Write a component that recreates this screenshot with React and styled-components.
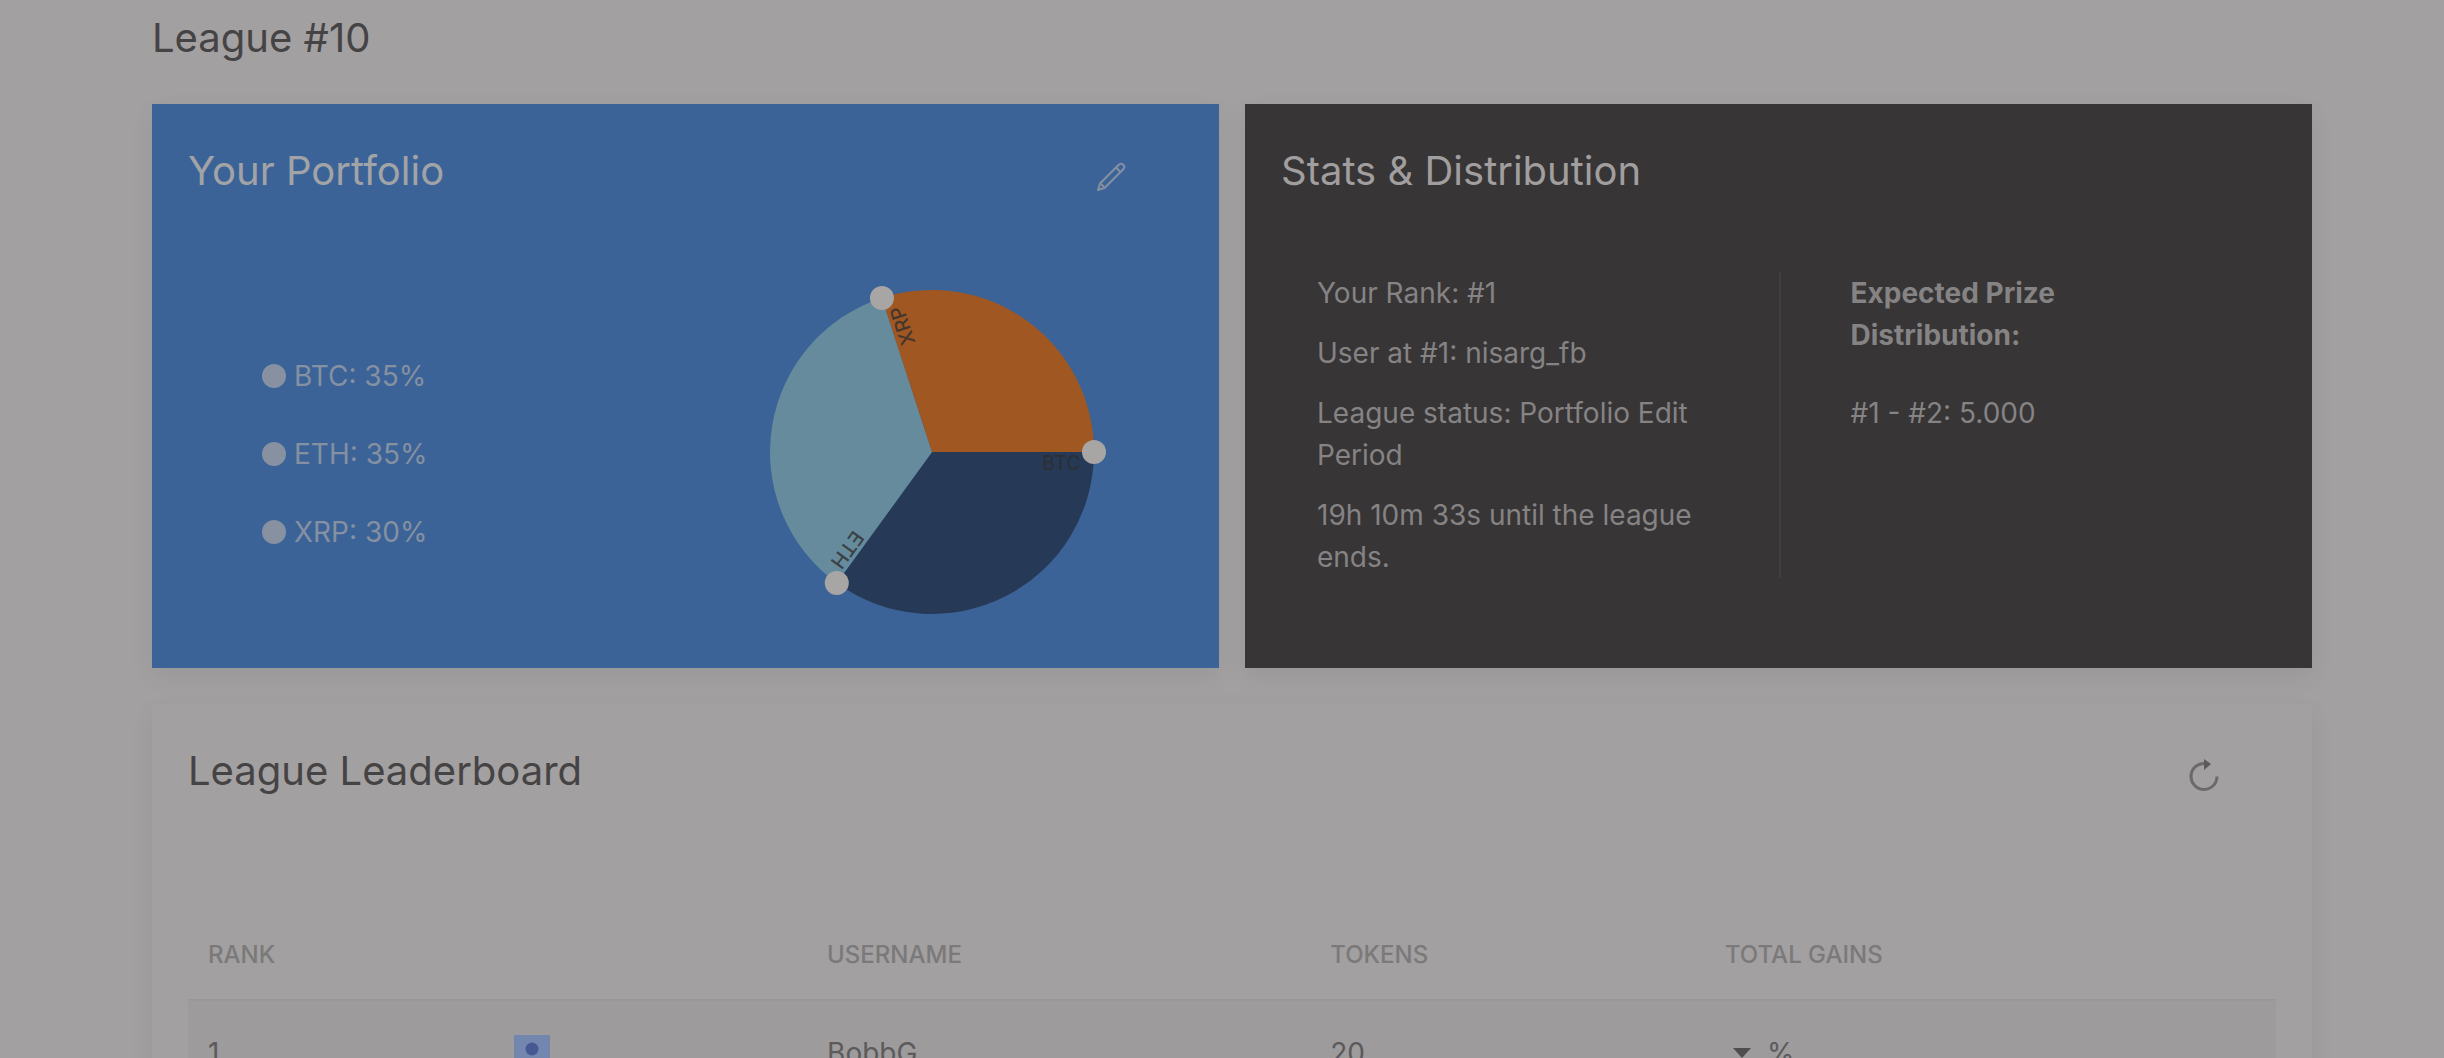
import React from "react";
import styled, { createGlobalStyle } from "styled-components";

const GlobalStyle = createGlobalStyle`
  *, *::before, *::after { box-sizing: border-box; }
  body {
    margin: 0;
    background: #a2a0a0;
    color: #454344;
    font-family: Inter, "Liberation Sans", sans-serif;
    font-size: 28px;
    line-height: 42px;
  }
`;

const Page = styled.main`
  height: 100vh;
  overflow: hidden;
  padding: 12px 132px 0 152px;
`;

const PageTitle = styled.h1`
  margin: 0 0 40px;
  font-size: 40px;
  line-height: 52px;
  font-weight: 400;
`;

const Cards = styled.div`
  display: grid;
  grid-template-columns: 1fr 1fr;
  gap: 36px 26px;
`;

const tones = {
  blue: { bg: "#3b6397", title: "#a2a3a6", text: "#8590a1" },
  dark: { bg: "#383536", title: "#a09e9f", text: "#858384" },
  plain: { bg: "#a2a0a0", title: "#454344", text: "#5c5a5b" },
};

const Card = styled.section`
  display: flex;
  flex-direction: column;
  min-width: 0;
  min-height: 564px;
  padding: 36px;
  grid-column: ${(p) => (p.$wide ? "1 / -1" : "auto")};
  background: ${(p) => tones[p.$tone].bg};
  color: ${(p) => tones[p.$tone].text};
  box-shadow: 0 8px 24px rgba(0, 0, 0, 0.06);
`;

const CardHeader = styled.header`
  display: flex;
  align-items: center;
  justify-content: space-between;
  padding-right: 54px;
`;

const CardTitle = styled.h2`
  margin: 0;
  font-size: 40px;
  line-height: 62px;
  font-weight: 400;
  color: ${(p) => tones[p.$tone].title};
`;

const IconButton = styled.button`
  display: flex;
  padding: 12px 0 0;
  border: 0;
  background: none;
  color: inherit;
  cursor: pointer;
`;

const PortfolioBody = styled.div`
  flex: 1;
  display: grid;
  grid-template-columns: 1fr 1fr;
  align-items: center;
  padding-top: 70px;
`;

const Legend = styled.ul`
  display: grid;
  gap: 36px;
  margin: 0;
  padding: 4px 0 0 74px;
  list-style: none;
`;

const LegendItem = styled.li`
  display: flex;
  align-items: center;
  gap: 8px;
`;

const Dot = styled.span`
  width: 24px;
  height: 24px;
  border-radius: 50%;
  background: #8791a1;
`;

const Pie = styled.svg`
  justify-self: center;
  margin-right: 4px;
  overflow: visible;
`;

const StatsBody = styled.div`
  display: grid;
  grid-template-columns: 1fr 1fr;
  padding-top: 70px;
`;

const StatsColumn = styled.div`
  display: grid;
  align-content: start;
  gap: ${(p) => p.$gap};
  padding: 0 36px;
`;

const PrizeColumn = styled(StatsColumn)`
  padding-left: 70px;
  border-left: 2px solid #413e3f;
`;

const Line = styled.p`
  margin: 0;
`;

const PrizeTitle = styled.h3`
  margin: 0;
  max-width: 320px;
  font-size: 28px;
  line-height: 42px;
  font-weight: 700;
`;

const Table = styled.table`
  width: 100%;
  margin-top: 100px;
  table-layout: fixed;
  border-collapse: collapse;
`;

const Col = styled.col`
  width: ${(p) => p.$width};
`;

const HeadCell = styled.th`
  height: 98px;
  padding: 8px 20px 0;
  text-align: left;
  text-transform: uppercase;
  font-size: 24px;
  font-weight: 500;
  color: #7b797a;
`;

const Row = styled.tr`
  border-top: 2px solid #999798;
  background: #9d9b9b;
`;

const Cell = styled.td`
  height: 104px;
  padding: 0 20px;
`;

const Avatar = styled.svg`
  display: block;
`;

const Gain = styled.span`
  display: flex;
  align-items: center;
  gap: 16px;
  padding-left: 8px;
`;

const Caret = styled.span`
  border: 9px solid transparent;
  border-top: 10px solid #4f4d4e;
  border-bottom: 0;
`;

const PencilIcon = () => (
  <svg width="36" height="36" viewBox="0 0 36 36" fill="none" stroke="currentColor" strokeWidth="2" strokeLinejoin="round" aria-hidden="true">
    <path d="M5 31 L7 24.500 L25.500 6 Q28 3.500 30.500 6 Q32.500 8 30 10.500 L11.500 29 Z" />
    <path d="M23 8.500 L27.500 13 M8 25 L11 28" />
  </svg>
);

const RefreshIcon = () => (
  <svg width="36" height="36" viewBox="0 0 36 36" fill="none" stroke="currentColor" aria-hidden="true">
    <path d="M31 17.500 A13 13 0 1 1 19 4.500" strokeWidth="3" stroke="#6b696a" />
    <path d="M18 0 L25 5 L18 11 Z" fill="currentColor" stroke="none" />
  </svg>
);

const holdings = [
  { coin: "BTC", share: 35, color: "#263a57" },
  { coin: "ETH", share: 35, color: "#668b9d" },
  { coin: "XRP", share: 30, color: "#a05722" },
];

const RADIUS = 162;

const pointAt = (share) => {
  const angle = (share / 100) * Math.PI * 2;
  return [Math.cos(angle) * RADIUS, Math.sin(angle) * RADIUS];
};

const slices = holdings.map((holding, i) => {
  const start = holdings.slice(0, i).reduce((sum, h) => sum + h.share, 0);
  return { ...holding, start, from: pointAt(start), to: pointAt(start + holding.share) };
});

const PieLabel = styled.text`
  font-size: 20px;
  font-weight: 500;
  fill: rgba(46, 46, 46, 0.8);
  text-anchor: end;
`;

function PortfolioPie() {
  return (
    <Pie width="324" height="324" viewBox="-162 -162 324 324" role="img" aria-label="Portfolio split">
      {slices.map((s) => (
        <path key={s.coin} fill={s.color} d={`M0 0 L${s.from.join(" ")} A${RADIUS} ${RADIUS} 0 0 1 ${s.to.join(" ")} Z`} />
      ))}
      {slices.map((s) => (
        <PieLabel key={s.coin} x="149" y="18" transform={`rotate(${s.start * 3.6})`}>
          {s.coin}
        </PieLabel>
      ))}
      {slices.map((s) => (
        <circle key={s.coin} cx={s.from[0]} cy={s.from[1]} r="12" fill="#a8a5a5" />
      ))}
    </Pie>
  );
}

const columns = [
  { label: "Rank", width: "14.65%" },
  { label: "", width: "15%" },
  { label: "Username", width: "24.1%" },
  { label: "Tokens", width: "18.9%" },
  { label: "Total gains", width: "27.35%" },
];

export default function App() {
  return (
    <>
      <GlobalStyle />
      <Page>
        <PageTitle>League #10</PageTitle>
        <Cards>
          <Card $tone="blue">
            <CardHeader>
              <CardTitle $tone="blue">Your Portfolio</CardTitle>
              <IconButton type="button" aria-label="Edit portfolio">
                <PencilIcon />
              </IconButton>
            </CardHeader>
            <PortfolioBody>
              <Legend>
                {holdings.map((h) => (
                  <LegendItem key={h.coin}>
                    <Dot />
                    {`${h.coin}: ${h.share}%`}
                  </LegendItem>
                ))}
              </Legend>
              <PortfolioPie />
            </PortfolioBody>
          </Card>

          <Card $tone="dark">
            <CardHeader>
              <CardTitle $tone="dark">Stats &amp; Distribution</CardTitle>
            </CardHeader>
            <StatsBody>
              <StatsColumn $gap="18px">
                <Line>Your Rank: #1</Line>
                <Line>User at #1: nisarg_fb</Line>
                <Line>League status: Portfolio Edit Period</Line>
                <Line>19h 10m 33s until the league ends.</Line>
              </StatsColumn>
              <PrizeColumn $gap="36px">
                <PrizeTitle>Expected Prize Distribution:</PrizeTitle>
                <Line>#1 - #2: 5.000</Line>
              </PrizeColumn>
            </StatsBody>
          </Card>

          <Card $tone="plain" $wide>
            <CardHeader>
              <CardTitle $tone="plain">League Leaderboard</CardTitle>
              <IconButton type="button" aria-label="Refresh leaderboard">
                <RefreshIcon />
              </IconButton>
            </CardHeader>
            <Table>
              <colgroup>
                {columns.map((c) => (
                  <Col key={c.label} $width={c.width} />
                ))}
              </colgroup>
              <thead>
                <tr>
                  {columns.map((c) => (
                    <HeadCell key={c.label} scope="col">
                      {c.label}
                    </HeadCell>
                  ))}
                </tr>
              </thead>
              <tbody>
                <Row>
                  <Cell>1</Cell>
                  <Cell>
                    <Avatar width="36" height="36" viewBox="0 0 36 36" role="img" aria-label="Avatar">
                      <rect width="36" height="36" fill="#7386ae" />
                      <circle cx="18" cy="14" r="6.500" fill="#465894" />
                      <path d="M5 36 Q5 23 18 23 Q31 23 31 36 Z" fill="#465894" />
                    </Avatar>
                  </Cell>
                  <Cell>BobbG</Cell>
                  <Cell>20</Cell>
                  <Cell>
                    <Gain>
                      <Caret />%
                    </Gain>
                  </Cell>
                </Row>
              </tbody>
            </Table>
          </Card>
        </Cards>
      </Page>
    </>
  );
}
